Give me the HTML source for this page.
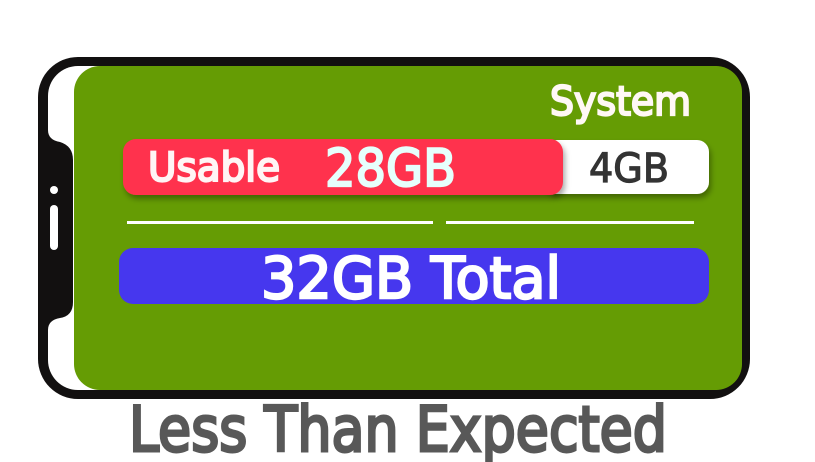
<!DOCTYPE html>
<html><head><meta charset="utf-8"><style>
html,body{margin:0;padding:0;background:#fff;width:815px;height:462px;overflow:hidden}
svg{display:block}
text{font-family:"DejaVu Sans","Liberation Sans",sans-serif;font-weight:normal;paint-order:stroke fill}
</style></head><body>
<svg width="815" height="462" viewBox="0 0 815 462">
<defs>
<filter id="sh" x="-10%" y="-20%" width="120%" height="160%"><feDropShadow dx="2" dy="4" stdDeviation="3" flood-color="#000" flood-opacity="0.35"/></filter>
</defs>
<rect x="38" y="57" width="712" height="342" rx="40" fill="#121010"/>
<rect x="48" y="66" width="694" height="324" rx="30" fill="#fff"/>
<path d="M48 130 Q48 140 60 142 Q73 146 73 160 L73 302 Q73 316 60 318 Q48 320 48 330 Z" fill="#121010"/>
<rect x="74" y="66" width="668" height="324" rx="26" fill="#659c04"/>
<circle cx="54" cy="190" r="4" fill="#fff"/>
<rect x="50" y="205" width="8" height="45" rx="4" fill="#fff"/>
<text x="550" y="115" font-size="40" fill="#fff8f5" stroke="#fff8f5" stroke-width="2.2" textLength="141" lengthAdjust="spacingAndGlyphs">System</text>
<rect x="545" y="140" width="164" height="54" rx="12" fill="#fff" filter="url(#sh)"/>
<rect x="123" y="139" width="440" height="56" rx="13" fill="#ff334d" filter="url(#sh)"/>
<text x="148" y="181" font-size="40" fill="#fff5f5" stroke="#fff5f5" stroke-width="2.2" textLength="132" lengthAdjust="spacingAndGlyphs">Usable</text>
<text x="325" y="186" font-size="52" fill="#e6fffc" stroke="#e6fffc" stroke-width="2.2" textLength="131" lengthAdjust="spacingAndGlyphs">28GB</text>
<text x="589" y="182" font-size="40" fill="#333" stroke="#333" stroke-width="1.2" textLength="80" lengthAdjust="spacingAndGlyphs">4GB</text>
<rect x="127" y="221" width="306" height="3" fill="#fff"/>
<rect x="446" y="221" width="248" height="3" fill="#fff"/>
<rect x="119" y="248" width="590" height="56" rx="14" fill="#4637ee"/>
<text x="261" y="298" font-size="57" fill="#fff" stroke="#fff" stroke-width="2.4" textLength="300" lengthAdjust="spacingAndGlyphs">32GB Total</text>
<text x="129" y="451" font-size="62" fill="#585858" stroke="#585858" stroke-width="3" textLength="538" lengthAdjust="spacingAndGlyphs">Less Than Expected</text>
</svg>
</body></html>
